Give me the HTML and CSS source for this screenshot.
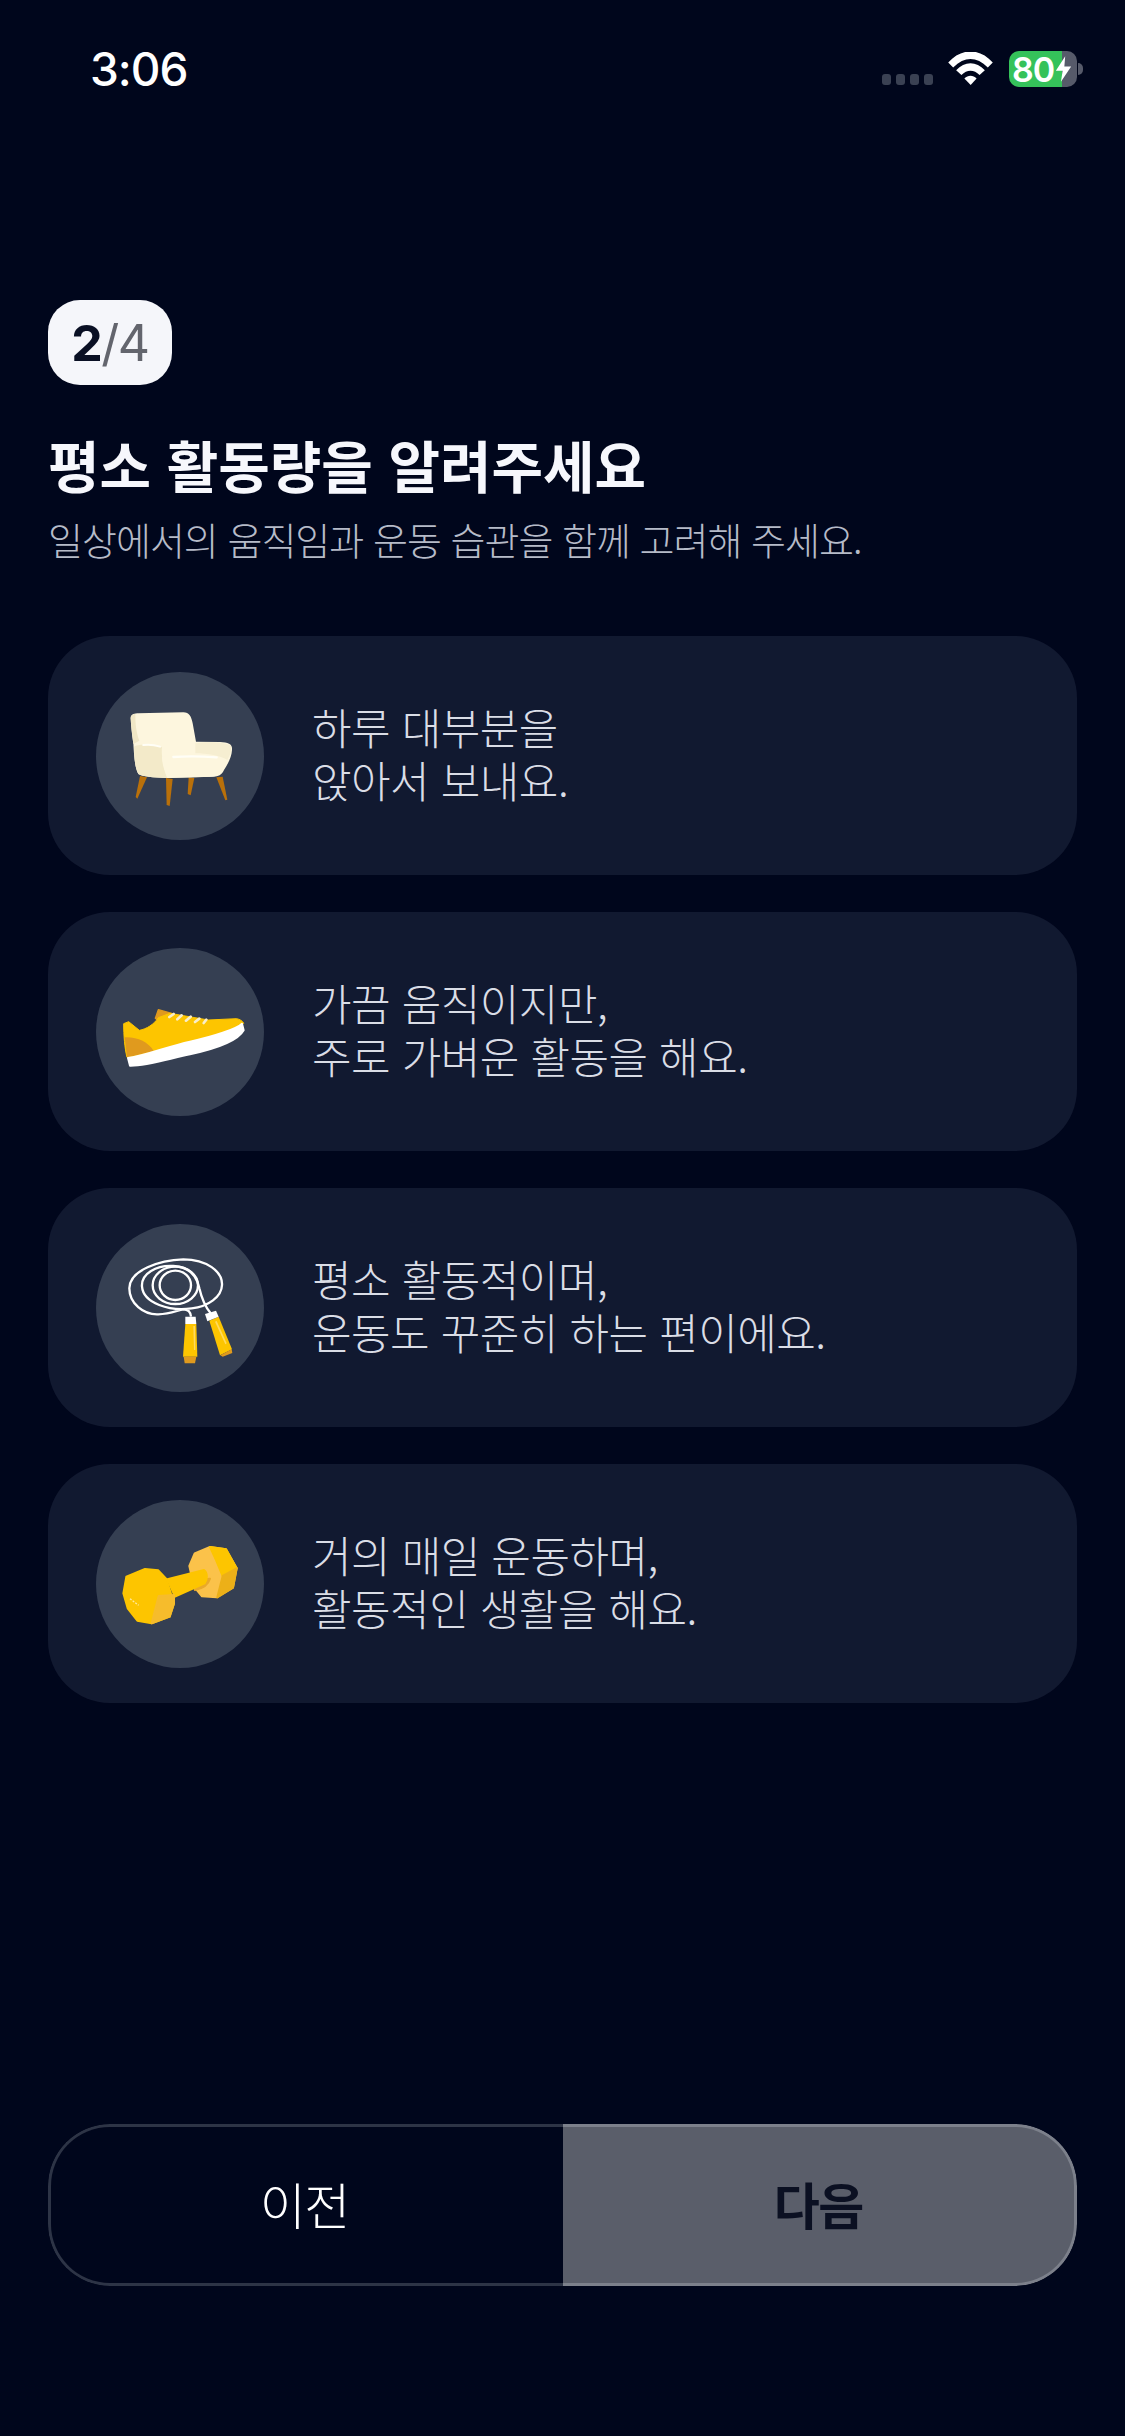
FILE: index.html
```html
<!DOCTYPE html>
<html lang="ko">

<head>
  <meta charset="UTF-8" />
  <meta name="viewport" content="width=device-width, initial-scale=1.0" />
  <title>활동량</title>
  <link rel="stylesheet" href="styles.css">
</head>

<body>
  <div class="screen">
    <div class="status">
      <span class="time">3:06</span>
      <div class="status-icons">
        <div class="dots"><i></i><i></i><i></i><i></i></div>
        <svg class="wifi" viewBox="265 65 135 100">
          <path d="M265 97 C305 52 360 52 400 97 L385 112 C350 78 315 78 280 112Z" fill="#fff" />
          <path d="M289 120 C315 92 350 92 376 120 L360 135 C343 117 322 117 305 135Z" fill="#fff" />
          <path d="M314 145 C325 134 340 134 351 145 L333 165Z" fill="#fff" />
        </svg>
        <div class="battery">
          <span>80</span>
          <svg class="bolt" viewBox="0 0 20 30">
            <path d="M12 0 L1 17 L9 17 L7 30 L19 12 L11 12Z" fill="#fff" />
          </svg>
        </div>
      </div>
    </div>

    <div class="content">
      <div class="step"><b>2</b><span>/4</span></div>
      <h1>평소 활동량을 알려주세요</h1>
      <p class="sub">일상에서의 움직임과 운동 습관을 함께 고려해 주세요.</p>

      <div class="list">
        <div class="card">
          <div class="circle">
            <svg viewBox="48 66 504 504">
              <path d="M180 378 L201 382 L172 446 L167 441Z" fill="#b9700a" />
              <path d="M258 384 L278 387 L269 468 L260 465Z" fill="#b9700a" />
              <path d="M326 382 L343 384 L332 436 L323 432Z" fill="#b9700a" />
              <path d="M409 382 L428 380 L442 449 L436 451Z" fill="#b9700a" />
              <path d="M152 205 C151 192 165 190 175 190 L310 187 C328 187 334 200 338 220 L348 275 L420 276 C446 278 458 282 456 300 C455 320 445 340 432 360 C425 375 415 380 400 380 L260 384 C215 383 190 380 175 372 C165 355 162 320 160 280 C155 250 153 225 152 205Z" fill="#fdf6de" />
              <path d="M152 205 C153 195 160 192 166 191 C166 220 168 245 178 272 L160 282 C156 250 153 225 152 205Z" fill="#f0e7c6" />
              <path d="M162 290 C175 280 230 285 246 292 C243 315 250 350 262 384 C215 383 190 380 175 372 C165 355 162 320 162 290Z" fill="#f3eac9" />
              <path d="M346 280 C380 274 430 276 452 286 C456 300 450 318 442 330 C425 318 380 310 346 310Z" fill="#f6eed1" />
              <path d="M246 320 C300 308 400 312 436 330 C436 345 428 362 418 372 C410 380 400 380 390 380 L262 384 C252 360 246 340 246 320Z" fill="#fdf6de" />
              <path d="M280 321 C320 318 370 319 410 322" fill="none" stroke="#fffef6" stroke-width="7" stroke-linecap="round" />
              <path d="M190 285 C205 283 225 285 240 290" fill="none" stroke="#fffef6" stroke-width="6" stroke-linecap="round" />
            </svg>
          </div>
          <p class="label">하루 대부분을<br>앉아서 보내요.</p>
        </div>

        <div class="card">
          <div class="circle">
            <svg viewBox="48 69 504 504">
              <path d="M235 254 L275 265 L240 292 L226 280Z" fill="#e09a1e" stroke="#e09a1e" stroke-width="4" stroke-linejoin="round" />
              <path d="M131 296 L146 290 L178 316 C200 312 222 298 235 278 L270 265 L385 285 L470 281 C480 283 488 288 491 295 C470 312 400 335 330 350 C260 365 200 392 141 397 C134 370 131 330 131 296Z" fill="#fdc500" stroke="#fdc500" stroke-width="3" stroke-linejoin="round" />
              <path d="M134 337 C170 335 205 350 221 378 C190 385 165 393 141 397Z" fill="#e09a1e" />
              <path d="M144 399 L150 422 C200 423 260 403 330 388 C400 373 472 350 491 316 L486 296 C470 312 400 335 330 350 C260 365 200 392 144 399Z" fill="#fff" stroke="#fff" stroke-width="6" stroke-linejoin="round" />
              <g stroke="#f8eecb" stroke-width="8" stroke-linecap="round" fill="none">
                <path d="M268 276 L281 267" />
                <path d="M292 283 L305 271" />
                <path d="M318 287 L332 275" />
                <path d="M345 291 L358 281" />
                <path d="M371 294 L379 284" />
              </g>
            </svg>
          </div>
          <p class="label">가끔 움직이지만,<br>주로 가벼운 활동을 해요.</p>
        </div>

        <div class="card">
          <div class="circle">
            <svg viewBox="48 72 504 504">
              <g fill="none" stroke="#fff" stroke-width="7">
                <path d="M333 350 C332 338 326 328 310 328 C290 332 270 342 235 343 C190 345 148 310 148 265 C148 210 240 180 310 178 C380 178 428 215 426 255 C425 290 385 320 335 325 C270 335 190 310 186 260 C183 220 230 195 280 198 C325 200 350 225 358 265 C365 295 375 320 392 340" />
                <ellipse cx="286" cy="256" rx="68" ry="56" />
                <ellipse cx="286" cy="256" rx="47" ry="44" />
              </g>
              <path d="M316 372 L349 372 L352 470 L309 470Z" fill="#fdc500" />
              <path d="M311 470 L349 470 L345 490 L314 490Z" fill="#e09a1e" />
              <path d="M316 350 L347 350 L349 372 L316 372Z" fill="#fff" />
              <path d="M340 378 L345 378 L346 450 L342 450Z" fill="#ffda5e" />
              <path d="M388 362 L416 350 L456 448 L420 466Z" fill="#fdc500" />
              <path d="M421 466 L455 448 L457 459 L428 470Z" fill="#e09a1e" />
              <path d="M375 342 L408 332 L416 350 L382 364Z" fill="#fff" />
              <path d="M405 365 L410 363 L440 430 L436 433Z" fill="#ffda5e" />
            </svg>
          </div>
          <p class="label">평소 활동적이며,<br>운동도 꾸준히 하는 편이에요.</p>
        </div>

        <div class="card">
          <div class="circle">
            <svg viewBox="48 60 504 504">
              <g stroke-linejoin="round" stroke-width="6">
                <path d="M328 258 L344 220 L390 201 L438 208 L470 265 L459 323 L410 352 L366 349 L342 320Z" fill="#fbc24a" stroke="#fbc24a" />
                <path d="M390 201 L438 208 L470 265 L428 288 L408 240Z" fill="#fdc500" stroke="#fdc500" />
                <path d="M428 288 L470 265 L459 323 L412 352Z" fill="#ecb018" stroke="#ecb018" />
                <path d="M345 330 C365 326 384 316 390 296 L340 300Z" fill="#e9a92a" stroke="#e9a92a" />
                <path d="M262 298 L372 270 C383 278 383 298 374 310 L285 350Z" fill="#fdc500" stroke="#fdc500" />
                <path d="M130 340 L139 290 L195 267 L235 271 L259 297 L282 370 L269 410 L215 430 L172 422 L143 385Z" fill="#fdc500" stroke="#fdc500" />
                <path d="M236 348 L282 345 L282 370 L269 410 L215 430Z" fill="#f6bc2c" stroke="#f6bc2c" />
              </g>
              <path d="M150 356 L176 376" stroke="#ffeaa0" stroke-width="4" stroke-dasharray="6 4" fill="none" />
            </svg>
          </div>
          <p class="label">거의 매일 운동하며,<br>활동적인 생활을 해요.</p>
        </div>
      </div>
    </div>

    <div class="nav">
      <div class="nav-btn prev">이전</div>
      <div class="nav-btn next">다음</div>
    </div>
  </div>
</body>

</html>
```

FILE: styles.css
```css
* {
  box-sizing: border-box;
}

body {
  margin: 0;
  background: #00061c;
  font-family: "Noto Sans CJK KR", "Noto Sans", sans-serif;
}

.screen {
  height: 2436px;
  display: flex;
  flex-direction: column;
}

.status {
  height: 140px;
  padding: 44px 48px 0 90px;
  display: flex;
  justify-content: space-between;
  align-items: flex-start;
}

.time {
  font-family: Inter, sans-serif;
  font-size: 46px;
  font-weight: 500;
  letter-spacing: -1px;
  line-height: 50px;
  color: #fff;
}

.status-icons {
  margin-top: 7px;
  display: flex;
  align-items: flex-start;
}

.dots {
  margin-top: 23px;
  margin-right: 15px;
  display: flex;
  gap: 5px;
}

.dots i {
  width: 9px;
  height: 11px;
  border-radius: 3px;
  background: #3a4153;
}

.wifi {
  width: 45px;
  height: 33px;
  margin-top: 1px;
  margin-right: 16px;
}

.battery {
  position: relative;
  width: 68px;
  height: 36px;
  border-radius: 10px;
  background: linear-gradient(to right, #35c25a 78%, #565a6a 78%);
  display: flex;
  align-items: center;
  padding-left: 3px;
  color: #fff;
  font-family: Inter, sans-serif;
  font-size: 34px;
  font-weight: 600;
  letter-spacing: -1px;
}

.battery::after {
  content: "";
  position: absolute;
  right: -6px;
  top: 12px;
  width: 5px;
  height: 12px;
  border-radius: 0 5px 5px 0;
  background: #565a6a;
}

.bolt {
  width: 17px;
  height: 26px;
  margin-left: 1px;
}

.content {
  padding: 160px 48px 0;
}

.step {
  width: 124px;
  height: 85px;
  border-radius: 32px;
  background: #f5f6fa;
  display: flex;
  align-items: center;
  justify-content: center;
  font-family: Inter, sans-serif;
  font-size: 50px;
  letter-spacing: -1.5px;
  color: #63656d;
}

.step b {
  color: #0a1024;
  font-weight: 700;
}

h1 {
  margin: 44px 0 0;
  font-size: 56px;
  font-weight: 700;
  line-height: 70px;
  color: #f6f7fc;
}

.sub {
  margin: 12px 0 0;
  font-size: 38px;
  letter-spacing: -1px;
  line-height: 55px;
  font-weight: 300;
  color: #b6bbc8;
}

.list {
  margin-top: 70px;
  display: flex;
  flex-direction: column;
  gap: 37px;
}

.card {
  height: 239px;
  border-radius: 62px;
  background: #111930;
  padding-left: 48px;
  display: flex;
  align-items: center;
  gap: 48px;
}

.circle {
  width: 168px;
  height: 168px;
  border-radius: 50%;
  background: #353f52;
  flex-shrink: 0;
}

.circle svg {
  display: block;
  width: 168px;
  height: 168px;
}

.label {
  margin: 0;
  padding-bottom: 6px;
  font-size: 43px;
  letter-spacing: -0.5px;
  line-height: 53px;
  font-weight: 300;
  color: #dadde6;
}

.nav {
  margin: auto 48px 150px;
  height: 162px;
  display: flex;
  border-radius: 62px;
  overflow: hidden;
  font-size: 50px;
  letter-spacing: -1.5px;
}

.nav-btn {
  flex: 0 0 50%;
  display: flex;
  align-items: center;
  justify-content: center;
  padding-bottom: 4px;
}

.prev {
  padding-right: 5px;
  border: 3px solid #2d3446;
  border-right: 0;
  border-radius: 62px 0 0 62px;
  font-weight: 300;
  color: #fff;
}

.next {
  border: 3px solid #7c808b;
  border-left: 0;
  border-radius: 0 62px 62px 0;
  background: #5a5e6a;
  font-weight: 700;
  color: #0b1022;
}
```
